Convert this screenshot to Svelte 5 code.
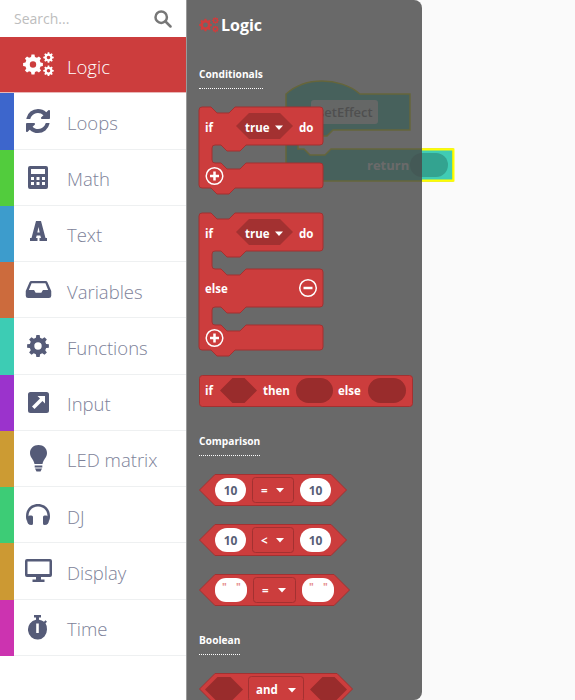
<script>
  function gear(cx, cy, ro, ri, hole, teeth) {
    const pts = [];
    const step = (Math.PI * 2) / teeth;
    for (let i = 0; i < teeth; i++) {
      const a = i * step - Math.PI / 2;
      const w = step * 0.24;
      const p = [[ri, a - w * 1.35], [ro, a - w * 0.8], [ro, a + w * 0.8], [ri, a + w * 1.35]];
      for (const [r, t] of p) pts.push(`${(cx + r * Math.cos(t)).toFixed(2)} ${(cy + r * Math.sin(t)).toFixed(2)}`);
    }
    const h = `M${cx - hole} ${cy}a${hole} ${hole} 0 1 0 ${hole * 2} 0a${hole} ${hole} 0 1 0 ${-hole * 2} 0z`;
    return `M${pts.join('L')}z${h}`;
  }
  const cogs = gear(10, 12.500, 10, 7.800, 3.200, 8) + gear(25.500, 5.500, 5.300, 4, 1.800, 8) + gear(25.500, 18.800, 5.300, 4, 1.800, 8);
  const flyCogs = gear(10, 12.500, 10, 7.800, 3.800, 8) + gear(25.500, 5.500, 5.300, 4, 1.900, 8) + gear(25.500, 18.800, 5.300, 4, 1.900, 8);
  const singleCog = gear(12, 12, 11, 8.400, 3.700, 8);

  const rows = [
    { name: 'Loops', color: '#3d66cc', icon: 'loops' },
    { name: 'Math', color: '#52cc3d', icon: 'math' },
    { name: 'Text', color: '#3d9ccc', icon: 'text' },
    { name: 'Variables', color: '#cc6b3d', icon: 'vars' },
    { name: 'Functions', color: '#3dccb4', icon: 'fn' },
    { name: 'Input', color: '#9b33cc', icon: 'input' },
    { name: 'LED matrix', color: '#cc9b33', icon: 'led' },
    { name: 'DJ', color: '#3dcc76', icon: 'dj' },
    { name: 'Display', color: '#cc9933', icon: 'display' },
    { name: 'Time', color: '#cc33b0', icon: 'time' }
  ];

  const R = 3;
  const topEdge = (w) => `M0 ${R}Q0 0 ${R} 0H12l6 6H30l6 -6H${w - R}Q${w} 0 ${w} ${R}`;
  const armEnd = (w, y) => `V${y - R}Q${w} ${y} ${w - R} ${y}`;
  const armNotch = (y) => `H47l-6 6H28l-6 -6H${13 + R}Q13 ${y} 13 ${y + R}`;
  const armStart = (w, y) => `V${y - R}Q13 ${y} ${13 + R} ${y}H22l6 6H41l6 -6H${w - R}Q${w} ${y} ${w} ${y + R}`;
  const foot = (y) => `H36l-6 6H18l-6 -6H${R}Q0 ${y} 0 ${y - R}z`;
  const ifPath = topEdge(124) + armEnd(124, 38) + armNotch(38) + armStart(124, 56) + armEnd(124, 81) + foot(81);
  const elsePath = topEdge(124) + armEnd(124, 38) + armNotch(38) + armStart(124, 56) + armEnd(124, 94) + armNotch(94) + armStart(124, 112) + armEnd(124, 137) + foot(137);
  const cmp = (w) => `M0.5 16L16 0.5H${w - 16}L${w - 0.5} 16L${w - 16} 31.5H16z`;
  const hexInner = (x, w, y = 3, h = 25) => `M${x} ${y + h / 2}L${x + h / 2} ${y}H${x + w - h / 2}L${x + w} ${y + h / 2}L${x + w - h / 2} ${y + h}H${x + h / 2}z`;
  const caret = (x, y) => `M${x} ${y}h8l-4 4.5z`;
</script>

<div class="page">
  <svg class="workspace" width="575" height="200" viewBox="0 0 575 200">
    <path class="ws-block" d="M286 94C296 85 310 81 322 81C335 81 350 85 360 94H410V130H333L327 136H314L308 130H298V149H304L310 155H325L331 149H453V181H286z" />
    <rect class="ws-input" x="311" y="100" width="67" height="24" rx="3" />
    <text class="ws-name" x="318" y="117">setEffect</text>
    <text class="ws-ret" x="367" y="170">return</text>
    <rect class="ws-pill" x="410" y="153" width="38" height="24" rx="12" />
    <path class="ws-sel" d="M422 149.500H453.500V180.500H422" />
  </svg>

  <aside class="toolbox">
    <div class="search">
      <span class="placeholder">Search...</span>
      <svg class="search-icon" width="18" height="18" viewBox="0 0 18 18">
        <circle cx="7.200" cy="7.200" r="5.700" />
        <path d="M11.500 11.500L16.500 16.500" />
      </svg>
    </div>
    <div class="row active">
      <svg class="cogs" width="31" height="25" viewBox="0 0 31 25"><path fill-rule="evenodd" d={cogs} /></svg>
      <span class="label">Logic</span>
    </div>
    {#each rows as row}
      <div class="row">
        <span class="band" style:background={row.color}></span>
        <span class="slot">
          {#if row.icon === 'loops'}
            <svg width="24" height="24" viewBox="128 128 1536 1536"><path d="M1639 1056q0 5-1 7-64 268-268 434.5t-478 166.5q-146 0-282.5-55t-243.5-157l-129 129q-19 19-45 19t-45-19-19-45v-448q0-26 19-45t45-19h448q26 0 45 19t19 45-19 45l-137 137q71 66 161 102t187 36q134 0 250-65t186-179q11-17 53-117 8-23 30-23h192q13 0 22.5 9.500t9.500 22.500zm25-800v448q0 26-19 45t-45 19h-448q-26 0-45-19t-19-45 19-45l138-138q-148-137-349-137-134 0-250 65t-186 179q-11 17-53 117-8 23-30 23h-199q-13 0-22.500-9.500t-9.500-22.500v-7q65-268 270-434.500t480-166.500q146 0 284 55.500t245 156.500l130-129q19-19 45-19t45 19 19 45z" /></svg>
          {:else if row.icon === 'math'}
            <svg width="20" height="23" viewBox="0 0 20 23"><path fill-rule="evenodd" d="M2 0H18Q20 0 20 2V21Q20 23 18 23H2Q0 23 0 21V2Q0 0 2 0zM3 3V8H17V3zM3 11V14H6V11zM8.500 11V14H11.500V11zM14 11V14H17V11zM3 16V19H6V16zM8.500 16V19H11.500V16zM14 16V19H17V16z" /></svg>
          {:else if row.icon === 'text'}
            <svg class="lift" width="17" height="20" viewBox="0 0 17 20"><path fill-rule="evenodd" d="M6 0H11L15.500 17H17V20H9.500V17H11L10.300 14.500H6.700L6 17H7.500V20H0V17H1.500zM7.300 11.500H9.700L8.500 6z" /></svg>
          {:else if row.icon === 'vars'}
            <svg width="27" height="17" viewBox="0 0 27 18"><path fill-rule="evenodd" d="M6 0H21Q22.500 0 23 1.200L27 10.500V15.500Q27 18 24.500 18H2.500Q0 18 0 15.500V10.500L4 1.200Q4.500 0 6 0zM6.200 2.500L3.300 9.500H8.800L10.500 12.500H16.500L18.200 9.500H23.700L20.800 2.500z" /></svg>
          {:else if row.icon === 'fn'}
            <svg width="24" height="24" viewBox="0 0 24 24"><path fill-rule="evenodd" d={singleCog} /></svg>
          {:else if row.icon === 'input'}
            <svg width="21" height="21" viewBox="0 0 21 21"><path fill-rule="evenodd" d="M2.500 0H18.500Q21 0 21 2.500V18.500Q21 21 18.500 21H2.500Q0 21 0 18.500V2.500Q0 0 2.500 0zM9.500 4L12 6.500L4 14.500L6.500 17L14.500 9L17 11.500V4z" /></svg>
          {:else if row.icon === 'led'}
            <svg width="17" height="27" viewBox="0 0 17 27"><path d="M8.500 0C13.500 0 17 3.500 17 8C17 12.500 13.500 14 12.500 19H4.500C3.500 14 0 12.500 0 8C0 3.500 3.500 0 8.500 0zM4.700 20.500H12.300V22.500H4.700zM5 23.500H12L10.500 26.500H6.500z" /></svg>
          {:else if row.icon === 'dj'}
            <svg width="24" height="21" viewBox="0 0 24 21"><path d="M12 0C19 0 24 5 24 12C24 14 23.800 15.500 23 17L21.500 15.200V12C21.500 6.500 17.500 2.500 12 2.500C6.500 2.500 2.500 6.500 2.500 12V15.200L1 17C.2 15.500 0 14 0 12C0 5 5 0 12 0z" /><path d="M4 11.500H5.500Q7 11.500 7 13V19.500Q7 21 5.500 21Q1 21 1 16Q1 11.500 4 11.500zM20 11.500H18.500Q17 11.500 17 13V19.500Q17 21 18.500 21Q23 21 23 16Q23 11.500 20 11.500z" /></svg>
          {:else if row.icon === 'display'}
            <svg width="27" height="23" viewBox="0 0 27 23"><path fill-rule="evenodd" d="M2 0H25Q27 0 27 2V16Q27 18 25 18H16V20.500H19.500V23H7.500V20.500H11V18H2Q0 18 0 16V2Q0 0 2 0zM2.500 2.500V15H24.500V2.500z" /></svg>
          {:else}
            <svg width="20" height="25" viewBox="0 0 20 25"><path fill-rule="evenodd" d="M6 0H13V2.500H11V4.700Q14 5 16 6.800L17.500 5.300L19 6.800L17.500 8.300Q19 10.500 19 14.500A9.500 10 0 1 1 8 4.700V2.500H6zM8.200 8.500V18H10.800V8.500z" /></svg>
          {/if}
        </span>
        <span class="label">{row.name}</span>
      </div>
    {/each}
  </aside>

  <section class="flyout">
    <div class="fly-title">
      <svg width="20" height="16" viewBox="0 0 31 25"><path class="fly-cogs" fill-rule="evenodd" d={flyCogs} /></svg>
      <span>Logic</span>
    </div>

    <h3>Conditionals</h3>
    <div class="stack">
      <svg width="130" height="88" viewBox="0 0 130 88">
        <path class="blk" d={ifPath} />
        <path class="hex-soft" d={hexInner(37, 57, 6, 26)} />
        <text x="6" y="25">if</text>
        <text x="46" y="25">true</text>
        <path class="caret" d={caret(76, 18.500)} />
        <text x="100" y="25">do</text>
        <circle class="ring" cx="15.500" cy="69" r="8.300" />
        <path class="sign" d="M15.500 64.500V73.500M11 69H20" />
      </svg>

      <svg width="130" height="144" viewBox="0 0 130 144">
        <path class="blk" d={elsePath} />
        <path class="hex-soft" d={hexInner(37, 57, 6, 26)} />
        <text x="6" y="25">if</text>
        <text x="46" y="25">true</text>
        <path class="caret" d={caret(76, 18.500)} />
        <text x="100" y="25">do</text>
        <text x="6" y="80">else</text>
        <circle class="ring" cx="109" cy="75" r="8.300" />
        <path class="sign" d="M104.500 75H113.500" />
        <circle class="ring" cx="15.500" cy="125" r="8.300" />
        <path class="sign" d="M15.500 120.500V129.500M11 125H20" />
      </svg>

      <svg width="214" height="32" viewBox="0 0 214 32">
        <rect class="blk" x="0.500" y="0.500" width="213" height="31" rx="3" />
        <path class="hole" d={hexInner(21, 37, 3, 25)} />
        <rect class="hole" x="97" y="3" width="37" height="25" rx="12.500" />
        <rect class="hole" x="169" y="3" width="38" height="25" rx="12.500" />
        <text x="6" y="20">if</text>
        <text x="64" y="20">then</text>
        <text x="139" y="20">else</text>
      </svg>
    </div>

    <h3 class="later">Comparison</h3>
    <div class="stack">
      <svg width="148" height="32" viewBox="0 0 148 32">
        <path class="blk" d={cmp(148)} />
        <rect class="white" x="16" y="4" width="31" height="24" rx="12" />
        <rect class="drop" x="53.500" y="3.500" width="41" height="25" rx="3" />
        <rect class="white" x="101" y="4" width="31" height="24" rx="12" />
        <text class="num" x="31.500" y="20.500">10</text>
        <text x="62" y="20.500">=</text>
        <path class="caret" d={caret(77, 14)} />
        <text class="num" x="116.500" y="20.500">10</text>
      </svg>
      <svg width="148" height="32" viewBox="0 0 148 32">
        <path class="blk" d={cmp(148)} />
        <rect class="white" x="16" y="4" width="31" height="24" rx="12" />
        <rect class="drop" x="53.500" y="3.500" width="41" height="25" rx="3" />
        <rect class="white" x="101" y="4" width="31" height="24" rx="12" />
        <text class="num" x="31.500" y="20.500">10</text>
        <text x="62" y="20.500">&lt;</text>
        <path class="caret" d={caret(77, 14)} />
        <text class="num" x="116.500" y="20.500">10</text>
      </svg>
      <svg width="151" height="32" viewBox="0 0 151 32">
        <path class="blk" d={cmp(151)} />
        <rect class="white" x="16" y="4" width="32" height="24" rx="11" />
        <rect class="drop" x="54.500" y="3.500" width="42" height="25" rx="3" />
        <rect class="white" x="103" y="4" width="32" height="24" rx="11" />
        <text class="quote" x="23" y="17">"</text>
        <text class="quote" x="37" y="17">"</text>
        <text x="63" y="20.500">=</text>
        <path class="caret" d={caret(79, 14)} />
        <text class="quote" x="110" y="17">"</text>
        <text class="quote" x="124" y="17">"</text>
      </svg>
    </div>

    <h3 class="later">Boolean</h3>
    <div class="stack">
      <svg width="154" height="32" viewBox="0 0 154 32">
        <path class="blk" d={cmp(154)} />
        <path class="hole" d={hexInner(6, 38, 4, 25)} />
        <rect class="drop" x="49.500" y="3.500" width="55" height="25" rx="3" />
        <path class="hole" d={hexInner(111, 37, 4, 25)} />
        <text x="57" y="21">and</text>
        <path class="caret" d={caret(89, 15)} />
      </svg>
    </div>
  </section>
</div>

<style>
  :global(body) {
    margin: 0;
    background: #fafafa;
  }
  .page {
    position: relative;
    display: flex;
    width: 575px;
    height: 700px;
    overflow: hidden;
    background: #fafafa;
    font-family: "Open Sans", "Liberation Sans", sans-serif;
  }
  .workspace {
    position: absolute;
    left: 0;
    top: 0;
  }
  .ws-block {
    fill: #40ccb4;
    stroke: #e0e000;
    stroke-width: 1.500;
  }
  .ws-input {
    fill: #e0ece8;
  }
  .ws-name {
    fill: #6e6e6e;
    font-size: 13px;
    font-weight: 600;
  }
  .ws-ret {
    fill: #fff;
    font-size: 13px;
    font-weight: 700;
  }
  .ws-pill {
    fill: #33a390;
  }
  .ws-sel {
    fill: none;
    stroke: #ffff00;
    stroke-width: 2;
  }
  .toolbox {
    position: relative;
    flex: none;
    width: 186px;
    height: 700px;
    background: #fff;
  }
  .search {
    display: flex;
    align-items: center;
    justify-content: space-between;
    box-sizing: border-box;
    height: 37px;
    padding: 0 14px 0 14px;
  }
  .placeholder {
    color: #bdbdbd;
    font-size: 14px;
  }
  .search-icon {
    fill: none;
    stroke: #777;
    stroke-width: 2.500;
    stroke-linecap: round;
  }
  .row {
    display: flex;
    align-items: center;
    box-sizing: border-box;
    height: 56.250px;
    border-bottom: 1px solid #eef0f1;
  }
  .band {
    flex: none;
    align-self: stretch;
    width: 14px;
    margin-bottom: -1px;
  }
  .slot {
    flex: none;
    display: flex;
    justify-content: center;
    width: 48px;
    margin-right: 5px;
  }
  .slot svg {
    fill: #555b78;
  }
  .slot .lift {
    margin-bottom: 4px;
  }
  .label {
    padding-top: 3px;
    color: #7d8299;
    font-size: 18.500px;
    font-weight: 300;
  }
  .active {
    background: #cc3d3d;
    border-bottom: 1px solid #e9b7b7;
  }
  .active .label {
    color: #fff;
  }
  .cogs {
    flex: none;
    margin: 0 13px 0 23px;
    fill: #fff;
  }
  .flyout {
    position: relative;
    flex: none;
    box-sizing: border-box;
    display: flex;
    flex-direction: column;
    align-items: flex-start;
    width: 236px;
    height: 700px;
    padding-left: 12px;
    overflow: hidden;
    background: rgba(72, 72, 72, 0.814);
    border-left: 1px solid #9a9a9a;
    border-top-right-radius: 8px;
    border-bottom-right-radius: 8px;
  }
  .flyout > * {
    flex: none;
  }
  .fly-title {
    display: flex;
    align-items: center;
    gap: 2px;
    height: 50px;
    margin-bottom: 16px;
    color: #fff;
    font-size: 16px;
    font-weight: 700;
  }
  .fly-cogs {
    fill: #d03c3c;
  }
  h3 {
    box-sizing: border-box;
    height: 23px;
    margin: 0 0 18px;
    padding-top: 1px;
    border-bottom: 1px dotted #fff;
    color: #fff;
    font-size: 10.200px;
    font-weight: 700;
    line-height: 14px;
  }
  .later {
    margin-top: 26px;
  }
  .stack {
    display: flex;
    flex-direction: column;
    gap: 18px;
  }
  .stack svg {
    display: block;
    overflow: visible;
  }
  .stack text {
    fill: #fff;
    font-size: 11.500px;
    font-weight: 700;
  }
  .blk {
    fill: #cc3d3d;
    stroke: #a33131;
  }
  .hex-soft {
    fill: #a33131;
  }
  .hole {
    fill: #992c2c;
  }
  .caret {
    fill: #fff;
  }
  .ring {
    fill: none;
    stroke: #fff;
    stroke-width: 1.500;
  }
  .sign {
    fill: none;
    stroke: #fff;
    stroke-width: 2.500;
  }
  .white {
    fill: #fff;
  }
  .drop {
    fill: #cc3d3d;
    stroke: #a33131;
  }
  .stack .num {
    fill: #575e75;
    font-size: 12px;
    text-anchor: middle;
  }
  .stack .quote {
    fill: #e58a8a;
    font-size: 10px;
  }
</style>
